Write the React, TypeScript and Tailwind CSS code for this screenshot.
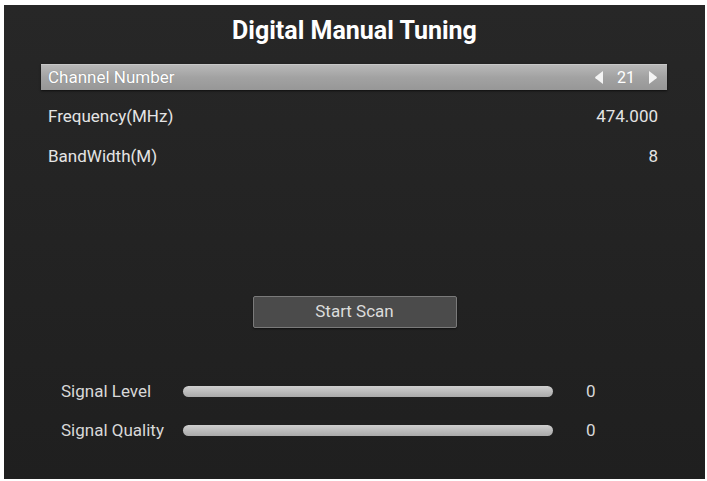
import React from 'react';

const rows = [
  { label: 'Frequency(MHz)', value: '474.000' },
  { label: 'BandWidth(M)', value: '8' },
];

const signals = [
  { label: 'Signal Level', value: '0' },
  { label: 'Signal Quality', value: '0' },
];

function Arrow({ dir }: { dir: 'left' | 'right' }) {
  return (
    <svg width="10" height="15" viewBox="0 0 10 15" className="shrink-0">
      {dir === 'left' ? (
        <path d="M9 1 L9 14 L1.5 8.3 Q0.6 7.5 1.5 6.7 Z" fill="#f4f4f4" />
      ) : (
        <path d="M1 1 L1 14 L8.5 8.3 Q9.4 7.5 8.5 6.7 Z" fill="#f4f4f4" />
      )}
    </svg>
  );
}

export default function App() {
  return (
    <div className="w-[707px] h-[481px] bg-white pt-[5px] pl-[4px] pr-[2px] pb-[2px] font-['Roboto',sans-serif]">
      <div className="w-full h-full bg-gradient-to-b from-[#272727] to-[#1f1f1f] flex flex-col">
        {/* title */}
        <div className="h-[52px] flex items-center justify-center">
          <h1 className="text-[25px] font-bold text-white">Digital Manual Tuning</h1>
        </div>

        <div className="px-[37px] pr-[38px] flex flex-col">
          {/* selected row */}
          <div className="h-[40px] flex items-center">
            <div className="w-full h-[26px] flex items-center justify-between pl-[7px] pr-[9px] bg-gradient-to-b from-[#b8b8b8] via-[#a2a2a2] to-[#979797] border-t border-[#c8c8c8] shadow-[0_1px_2px_rgba(0,0,0,0.6)]">
              <span className="text-[17px] text-white [text-shadow:0_0_1px_rgba(0,0,0,0.3)]">Channel Number</span>
              <div className="flex items-center gap-[13px]">
                <Arrow dir="left" />
                <span className="text-[16px] text-white">21</span>
                <Arrow dir="right" />
              </div>
            </div>
          </div>
          {rows.map((r) => (
            <div key={r.label} className="h-[40px] flex items-center justify-between pl-[7px] pr-[9px]">
              <span className="text-[17px] text-[#e4e4e4]">{r.label}</span>
              <span className="text-[17px] text-[#e4e4e4]">{r.value}</span>
            </div>
          ))}
        </div>

        {/* scan button */}
        <div className="mt-[119px] flex justify-center">
          <button className="w-[204px] h-[32px] bg-[#4b4b4b] border border-[#7a7a7a] rounded-[2px] text-[17px] text-[#dcdcdc] shadow-[0_1px_2px_rgba(0,0,0,0.5)]">
            Start Scan
          </button>
        </div>

        {/* signals */}
        <div className="mt-[44px] flex flex-col pl-[57px]">
          {signals.map((s) => (
            <div key={s.label} className="h-[39px] flex items-center">
              <span className="w-[122px] text-[17px] text-[#d8d8d8]">{s.label}</span>
              <div className="w-[370px] h-[11px] rounded-full bg-gradient-to-b from-[#cfcfcf] to-[#a9a9a9]" />
              <span className="ml-[33px] text-[17px] text-[#d8d8d8]">{s.value}</span>
            </div>
          ))}
        </div>
      </div>
    </div>
  );
}
